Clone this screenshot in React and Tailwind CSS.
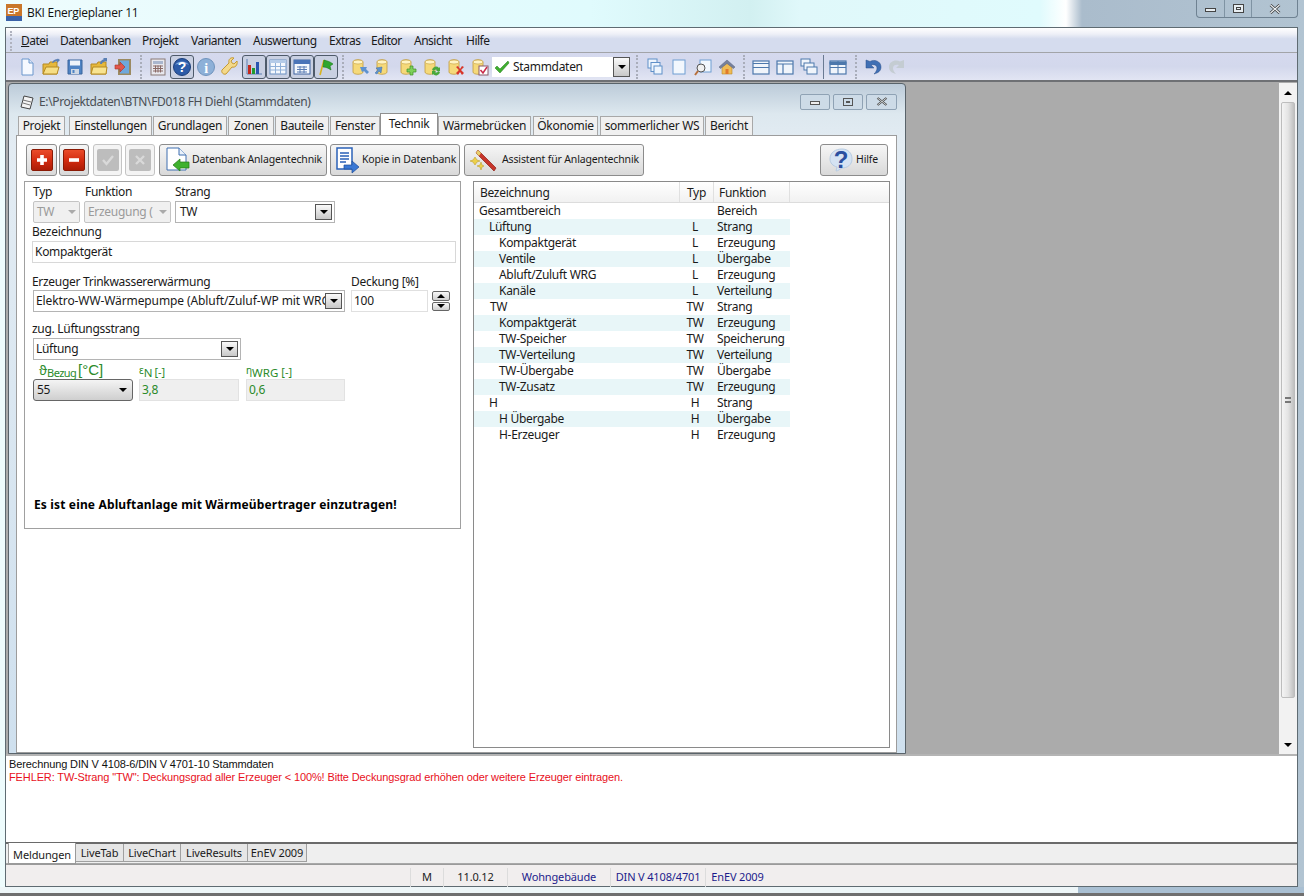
import React from 'react'

const font = "[font-family:'Noto_Sans',sans-serif]"

const menuItems = [
    { label: 'Datei', w: 'w-[39px]', underline: true },
    { label: 'Datenbanken', w: 'w-[82px]' },
    { label: 'Projekt', w: 'w-[49px]' },
    { label: 'Varianten', w: 'w-[62px]' },
    { label: 'Auswertung', w: 'w-[76px]' },
    { label: 'Extras', w: 'w-[42px]' },
    { label: 'Editor', w: 'w-[43px]' },
    { label: 'Ansicht', w: 'w-[52px]' },
    { label: 'Hilfe', w: 'w-[40px]' },
]

const docTabs = [
    { label: 'Projekt', w: 'w-[47px]', mr: 'mr-[4px]' },
    { label: 'Einstellungen', w: 'w-[83px]', mr: 'mr-[1px]' },
    { label: 'Grundlagen', w: 'w-[74px]', mr: 'mr-[1px]' },
    { label: 'Zonen', w: 'w-[46px]', mr: 'mr-[1px]' },
    { label: 'Bauteile', w: 'w-[54px]', mr: 'mr-[1px]' },
    { label: 'Fenster', w: 'w-[50px]', mr: '' },
    { label: 'Technik', w: 'w-[58px]', mr: '', active: true },
    { label: 'Wärmebrücken', w: 'w-[93px]', mr: 'mr-[2px]' },
    { label: 'Ökonomie', w: 'w-[65px]', mr: 'mr-[2px]' },
    { label: 'sommerlicher WS', w: 'w-[104px]', mr: 'mr-[1px]' },
    { label: 'Bericht', w: 'w-[48px]', mr: '' },
]

const treeRows = [
    { name: 'Gesamtbereich', indent: 'pl-[5px]', typ: '', fn: 'Bereich' },
    { name: 'Lüftung', indent: 'pl-[15px]', typ: 'L', fn: 'Strang' },
    { name: 'Kompaktgerät', indent: 'pl-[25px]', typ: 'L', fn: 'Erzeugung' },
    { name: 'Ventile', indent: 'pl-[25px]', typ: 'L', fn: 'Übergabe' },
    { name: 'Abluft/Zuluft WRG', indent: 'pl-[25px]', typ: 'L', fn: 'Erzeugung' },
    { name: 'Kanäle', indent: 'pl-[25px]', typ: 'L', fn: 'Verteilung' },
    { name: 'TW', indent: 'pl-[16px]', typ: 'TW', fn: 'Strang' },
    { name: 'Kompaktgerät', indent: 'pl-[25px]', typ: 'TW', fn: 'Erzeugung' },
    { name: 'TW-Speicher', indent: 'pl-[25px]', typ: 'TW', fn: 'Speicherung' },
    { name: 'TW-Verteilung', indent: 'pl-[25px]', typ: 'TW', fn: 'Verteilung' },
    { name: 'TW-Übergabe', indent: 'pl-[25px]', typ: 'TW', fn: 'Übergabe' },
    { name: 'TW-Zusatz', indent: 'pl-[25px]', typ: 'TW', fn: 'Erzeugung' },
    { name: 'H', indent: 'pl-[15px]', typ: 'H', fn: 'Strang' },
    { name: 'H Übergabe', indent: 'pl-[25px]', typ: 'H', fn: 'Übergabe' },
    { name: 'H-Erzeuger', indent: 'pl-[25px]', typ: 'H', fn: 'Erzeugung' },
]

const bottomTabs = [
    { label: 'LiveTab', w: 'w-[48px]' },
    { label: 'LiveChart', w: 'w-[57px]' },
    { label: 'LiveResults', w: 'w-[67px]' },
    { label: 'EnEV 2009', w: 'w-[59px]' },
]

const statusCells = [
    { label: 'M', w: 'w-[33px]', color: 'text-[#222]' },
    { label: '11.0.12', w: 'w-[64px]', color: 'text-[#222]' },
    { label: 'Wohngebäude', w: 'w-[103px]', color: 'text-[#1c1c8c]' },
    { label: 'DIN V 4108/4701', w: 'w-[95px]', color: 'text-[#1c1c8c]' },
    { label: 'EnEV 2009', w: 'w-[64px]', color: 'text-[#1c1c8c]' },
]

const Ico = ({ children, size = 20 }) => (
    <svg width={size} height={size} viewBox="0 0 20 20" className="block shrink-0">{children}</svg>
)

const Slot = ({ children, pressed }) => (
    <div className="w-[24px] h-[24px] flex items-center justify-center shrink-0">
        {pressed ? (
            <div className="w-[24px] h-[24px] flex items-center justify-center rounded-[3px] border border-[#4e5a6a] bg-[#c9d0e2]">{children}</div>
        ) : children}
    </div>
)

const Grip = ({ w }) => (
    <div className={`${w} h-[24px] flex justify-center shrink-0`}>
        <div className="w-[2px] h-full border-l-2 border-dotted border-[#a9adba]"></div>
    </div>
)

const Arrow = ({ color = 'border-t-black' }) => (
    <div className={`w-0 h-0 border-x-[4px] border-x-transparent border-t-[4px] ${color}`}></div>
)

const DropBtn = () => (
    <div className="absolute right-[2px] top-[2px] bottom-[2px] w-[17px] flex items-center justify-center border border-[#555] bg-gradient-to-b from-[#fafafa] to-[#c8c8c8]">
        <Arrow />
    </div>
)

const Combo = ({ text, w, pl = 'pl-[2px]' }) => (
    <div className={`${w} ${pl} relative h-[22px] border border-[#b4b4b4] bg-white flex items-center pb-[1px] overflow-hidden`}>
        <span className="whitespace-nowrap">{text}</span>
        <DropBtn />
    </div>
)

const DisabledSelect = ({ text, w }) => (
    <div className={`${w} relative h-[22px] border border-[#c4c4c4] rounded-[2px] bg-[#f0f0f0] flex items-center pl-[3px] pb-[1px] text-[#9a9a9a] overflow-hidden`}>
        <span className="whitespace-nowrap">{text}</span>
        <div className="absolute right-0 top-0 bottom-0 w-[15px] bg-[#f0f0f0] flex items-center justify-center">
            <Arrow color="border-t-[#aaa]" />
        </div>
    </div>
)

const Db = ({ children }) => (
    <Ico>
        <path d="M3 5c0-3 10-3 10 0v10c0 3-10 3-10 0z" fill="#f5d97a" stroke="#c29c3c" strokeWidth=".8" />
        <ellipse cx="8" cy="5" rx="5" ry="2" fill="#fff4c4" stroke="#c29c3c" strokeWidth=".6" />
        {children}
    </Ico>
)

const PanelBtn = ({ w, label, icon, gap = 'gap-[1px]', pl = 'pl-[3px]' }) => (
    <div className={`${w} ${gap} ${pl} h-[32px] shrink-0 flex items-center rounded-[3px] border border-[#8c8c8c] bg-gradient-to-b from-[#f6f6f6] to-[#d9d9d9]`}>
        {icon}
        <span className="whitespace-nowrap text-[10.5px] tracking-[-0.15px]">{label}</span>
    </div>
)

const SquareBtn = ({ w, children, disabled }) => (
    <div className={`${w} h-[32px] shrink-0 flex items-center justify-center rounded-[3px] border ${disabled ? 'border-[#c4c4c4] bg-[#f4f4f4]' : 'border-[#8c8c8c] bg-gradient-to-b from-[#f6f6f6] to-[#d9d9d9]'}`}>
        {children}
    </div>
)

const RedIcon = ({ path }) => (
    <div className="w-[22px] h-[22px] rounded-[2px] border border-[#8a1a05] bg-gradient-to-b from-[#ea4c2a] via-[#d42c10] to-[#ac1c06] flex items-center justify-center">
        <svg width="12" height="12" viewBox="0 0 12 12"><path d={path} fill="#fff" /></svg>
    </div>
)

const GrayIcon = ({ children }) => (
    <div className="w-[22px] h-[22px] rounded-[2px] bg-[#bdbdbd] flex items-center justify-center">
        <svg width="14" height="14" viewBox="0 0 14 14" fill="none" stroke="#d9d9d9" strokeWidth="2.4">{children}</svg>
    </div>
)

const WinBtn = ({ w, children }) => (
    <div className={`${w} h-[16px] flex items-center justify-center rounded-[2px] border border-[#8fa2b4] bg-[#cddbe7]`}>{children}</div>
)

const Sub = ({ base, sub, rest, baseCls, subCls, restCls, w }) => (
    <div className={`${w} h-[19px] shrink-0 flex items-end text-[#2a8a2a] whitespace-nowrap leading-none pb-[2px] tracking-normal`}>
        <span className={baseCls}>{base}</span>
        <span className={`${subCls} translate-y-[1px]`}>{sub}</span>
        <span className={restCls}>{rest}</span>
    </div>
)

export default function App() {
    return (
        <div className={`${font} relative w-[1304px] h-[896px] overflow-hidden text-[12px] tracking-[-0.3px] text-[#1a1a1a] bg-[linear-gradient(90deg,#eefcfd_0,#e0fbfd_590px,#d2f0f1_750px,#e0f8fa_800px,#e0fbfd_1040px,#fff_1066px,#aabccc_1082px,#b2c4d2_100%)]`}>
            {/* Title bar */}
            <div className="h-[27px] flex items-start justify-between pr-[6px]">
                <div className="flex items-center h-[25px] pl-[6px] gap-[5px]">
                    <svg width="16" height="17" viewBox="0 0 16 17" className="block">
                        <rect x="0" y="0" width="16" height="12" fill="#c9762a" />
                        <rect x="0" y="12" width="16" height="5" fill="#3a62a8" />
                        <text x="1.5" y="10" fontSize="9" fontWeight="700" fill="#fff" fontFamily="Liberation Sans">EP</text>
                    </svg>
                    <span className="text-[12px] tracking-[-0.25px] text-[#111] [font-family:'Open_Sans',sans-serif]">BKI Energieplaner 11</span>
                </div>
                <div className="flex h-[18px] w-[102px] border border-t-0 border-[#6f8292] rounded-b-[4px] overflow-hidden">
                    <div className="w-[28px] border-r border-[#7f93a3] flex items-center justify-center">
                        <div className="w-[11px] h-[4px] mt-[3px] bg-[#e8eef2] border border-[#444]"></div>
                    </div>
                    <div className="w-[27px] border-r border-[#7f93a3] flex items-center justify-center">
                        <div className="w-[11px] h-[9px] bg-[#e8eef2] border border-[#444] flex items-center justify-center">
                            <div className="w-[5px] h-[3px] border border-[#444]"></div>
                        </div>
                    </div>
                    <div className="flex-1 flex items-center justify-center">
                        <svg width="12" height="10" viewBox="0 0 12 10"><path d="M1.5 1l9 8M10.5 1l-9 8" stroke="#333" strokeWidth="2.6" /><path d="M1.5 1l9 8M10.5 1l-9 8" stroke="#eef2f5" strokeWidth="1.2" /></svg>
                    </div>
                </div>
            </div>

            {/* Application window */}
            <div className="ml-[5px] w-[1293px] h-[860px] border border-[#5f6b72] flex flex-col bg-white">
                {/* Menu */}
                <div className="h-[25px] shrink-0 flex items-center pl-[4px] pt-[2px] tracking-[-0.5px] border-b border-[#a2a4a8] bg-[linear-gradient(180deg,#fff_0,#eef0f7_25%,#d5dcee_45%,#d5dcee_100%)]">
                    <div className="w-[11px] h-[20px] border-l-2 border-dotted border-[#b0b3bf]"></div>
                    {menuItems.map((m) => (
                        <div key={m.label} className={`${m.w} shrink-0 whitespace-nowrap`}>
                            {m.underline ? <><span className="underline">D</span>atei</> : m.label}
                        </div>
                    ))}
                </div>

                {/* Toolbar */}
                <div className="h-[29px] shrink-0 flex items-center pl-[9px] border-b-2 border-[#6e7074] bg-gradient-to-b from-[#d5d9ee] via-[#d3d8ec] to-[#e2e5f3]">
                    <Slot><Ico><path d="M5 2h7l4 4v12H5z" fill="#f6f9ff" stroke="#6a96cc" /><path d="M12 2v4h4" fill="#dbe7f7" stroke="#6a96cc" /></Ico></Slot>
                    <Slot><Ico><path d="M2 7h6l1-2h7v12H2z" fill="#e6b83c" stroke="#b58a22" /><path d="M2 17l3-7h13l-2 7z" fill="#f6de85" stroke="#b58a22" /><path d="M11 6c1-3 3-4 6-4l-1-1 3 2-3 3v-2c-2 0-3 1-4 2z" fill="#5a7fb4" /></Ico></Slot>
                    <Slot><Ico><path d="M3 3h14v14H3z" fill="#4f83c4" stroke="#3a659c" /><rect x="5" y="3.500" width="10" height="5" fill="#eef3fa" /><rect x="6" y="12" width="8" height="5" fill="#cfd8e4" /><rect x="7.500" y="13" width="2" height="3" fill="#4f83c4" /></Ico></Slot>
                    <Slot><Ico><path d="M2 7h6l1-2h8v12H2z" fill="#e6b83c" stroke="#b58a22" /><path d="M2 17l2-7h14l-1 7z" fill="#f8e390" stroke="#b58a22" /><path d="M11 7c0-3 2-4 4-5l-1-1h4v4l-1-1c-2 1-4 1-4 3z" fill="#5a7fb4" /></Ico></Slot>
                    <Slot><Ico><rect x="5" y="2" width="13" height="16" fill="#9b8a62" /><path d="M7 3.500h9v13H7z" fill="#6fa8dc" /><path d="M2 8h5V5l5 5-5 5v-3H2z" fill="#e2574c" stroke="#a8332a" strokeWidth=".6" /></Ico></Slot>
                    <Grip w="w-[11px]" />
                    <Slot><Ico><rect x="3" y="2" width="14" height="16" fill="#e8e8ee" stroke="#8a7a76" /><rect x="5" y="4" width="10" height="3" fill="#a9b6ce" /><path d="M5 9h10M5 11.500h10M5 14h10M7.500 8.500v7M10 8.500v7M12.500 8.500v7" stroke="#8a6a66" /></Ico></Slot>
                    <Slot pressed><Ico><circle cx="10" cy="10" r="8.500" fill="#2c5ba8" stroke="#1d3f7a" /><path d="M3 8a8 7 0 0 1 14 0c-4-2-10-2-14 0z" fill="#7ea5dc" /><text x="10" y="15" textAnchor="middle" fontSize="14" fontWeight="700" fill="#fff" fontFamily="Liberation Sans">?</text></Ico></Slot>
                    <Slot><Ico><circle cx="10" cy="10" r="8.500" fill="#8db0d8" stroke="#6f93bd" /><text x="10" y="15.500" textAnchor="middle" fontSize="14" fontWeight="700" fill="#fff" fontFamily="Liberation Serif">i</text></Ico></Slot>
                    <Slot><Ico><path d="M17 4l-3 3-2-1-1-2 3-3c-3-1-6 1-5 5L2 13c-1 2 1 5 4 4l6-7c3 1 6-2 5-6z" fill="#f4d98a" stroke="#c59a34" /></Ico></Slot>
                    <Slot pressed><Ico><path d="M3 2v15h15" fill="none" stroke="#5e7eb0" /><rect x="4" y="8" width="3" height="9" fill="#c5281c" /><rect x="8" y="11" width="3" height="6" fill="#1f9a2e" /><rect x="12" y="5" width="3" height="12" fill="#2a55b0" /></Ico></Slot>
                    <Slot pressed><Ico><rect x="2" y="3" width="16" height="14" fill="#f4f8fd" stroke="#6a8fc0" /><rect x="2" y="3" width="16" height="3" fill="#b4cbe8" /><path d="M2 9.500h16M2 13h16M7.500 6v11M12.500 6v11" stroke="#8fb0d8" /></Ico></Slot>
                    <Slot pressed><Ico><rect x="2" y="3" width="16" height="14" fill="#f4f8fd" stroke="#3f62a0" /><rect x="2" y="3" width="16" height="4" fill="#4a74b8" /><path d="M5 10h10M5 12.500h10M5 15h10M8 9v7M12 9v7" stroke="#5a7db4" /></Ico></Slot>
                    <Slot pressed><Ico><path d="M4 18L8 3" stroke="#d8b21e" strokeWidth="1.600" /><path d="M8 3c3 1 5 1 9 4l-3 2 1 4c-3-2-5-3-8-3z" fill="#2ea62e" stroke="#1b7a1b" strokeWidth=".6" /></Ico></Slot>
                    <Grip w="w-[10px]" />
                    <Slot><Db><path d="M10 10l2 5 2-1 3 3 2-2-3-3 1-2z" fill="#5d92d0" /></Db></Slot>
                    <Slot><Db><path d="M1 16l3-3-2-2 6-1-1 6-2-2-2 3z" fill="#5d92d0" stroke="#3d6ca6" strokeWidth=".5" /></Db></Slot>
                    <Slot><Db><path d="M12 9h3v3h3v3h-3v3h-3v-3H9v-3h3z" fill="#7dd05a" stroke="#3f8f2a" strokeWidth=".7" /></Db></Slot>
                    <Slot><Db><path d="M10 13a4 4 0 0 1 7-2l1-1v4h-4l1-1a2 2 0 0 0-3 1zM18 15a4 4 0 0 1-7 2l-1 1v-4h4l-1 1a2 2 0 0 0 3-1z" fill="#49a83c" /></Db></Slot>
                    <Slot><Db><path d="M10 10l2-1 2 3 2-3 2 1-3 3 3 3-2 2-2-3-2 3-2-2 3-3z" fill="#d8362a" /></Db></Slot>
                    <Slot><Db><rect x="9" y="9" width="9" height="9" fill="#fff" stroke="#8a5a6a" /><path d="M10.500 13l2.500 3 4-6" fill="none" stroke="#c92a4a" strokeWidth="1.500" /></Db></Slot>

                    <div className="w-[138px] h-[24px] shrink-0 relative flex items-center">
                        <div className="w-[121px] h-[20px] bg-white flex items-center gap-[3px] pl-[2px]">
                            <svg width="16" height="14" viewBox="0 0 16 14" className="shrink-0"><path d="M1 8l2-2 3 3 8-8 1 2L6 13z" fill="#3fae2f" stroke="#227a18" strokeWidth=".5" /></svg>
                            <span>Stammdaten</span>
                        </div>
                        <div className="w-[17px] h-[20px] flex items-center justify-center border border-[#555] bg-gradient-to-b from-[#fafafa] to-[#c8c8c8]">
                            <Arrow />
                        </div>
                    </div>

                    <Grip w="w-[13px]" />
                    <Slot><Ico><rect x="3" y="2" width="9" height="9" fill="#eef5fd" stroke="#5f90c8" /><rect x="6" y="5.500" width="9" height="9" fill="#eef5fd" stroke="#5f90c8" /><rect x="9" y="9" width="8" height="8" fill="#eef5fd" stroke="#5f90c8" /></Ico></Slot>
                    <Slot><Ico><rect x="4" y="3" width="12" height="14" fill="#f2f7fd" stroke="#6f9ed2" /></Ico></Slot>
                    <Slot><Ico><rect x="7" y="3" width="11" height="12" fill="#f2f7fd" stroke="#6f9ed2" /><circle cx="8" cy="11" r="4" fill="#f0f0f0" stroke="#555" /><path d="M5 14l-3 4" stroke="#b8703c" strokeWidth="2" /></Ico></Slot>
                    <Slot><Ico><path d="M5 10v7h10v-7l-5-4z" fill="#efbb54" stroke="#b98a2a" strokeWidth=".6" /><path d="M10 3L2 10l1.500 1.500L10 6.500l6.500 5L18 10z" fill="#76809c" stroke="#5a6480" strokeWidth=".5" /><path d="M8.500 17v-5h3v5z" fill="#e07a2c" /></Ico></Slot>
                    <Grip w="w-[10px]" />
                    <Slot><Ico><rect x="2" y="4" width="16" height="13" fill="#f0f5fb" stroke="#4d78ac" strokeWidth="1.200" /><path d="M2 6.500h16M2 10.500h16" stroke="#4d78ac" strokeWidth="1.200" /></Ico></Slot>
                    <Slot><Ico><rect x="2" y="4" width="16" height="13" fill="#f0f5fb" stroke="#4d78ac" strokeWidth="1.200" /><path d="M2 7h16M8 7v10" stroke="#4d78ac" strokeWidth="1.200" /></Ico></Slot>
                    <Slot><Ico><rect x="2" y="2" width="9" height="7" fill="#f0f5fb" stroke="#4d78ac" /><rect x="5" y="6" width="10" height="7" fill="#f0f5fb" stroke="#4d78ac" /><rect x="8" y="10" width="10" height="7" fill="#f0f5fb" stroke="#4d78ac" /></Ico></Slot>
                    <div className="w-[5px] h-[24px] shrink-0 flex justify-center"><div className="w-[1px] h-full bg-[#6a7a92]"></div></div>
                    <Slot><Ico><rect x="2" y="4" width="16" height="13" fill="#f0f5fb" stroke="#4d78ac" strokeWidth="1.200" /><path d="M2 5h16v2.500H2zM10 4v13M2 10.500h16" fill="#4d78ac" stroke="#4d78ac" strokeWidth="1" /></Ico></Slot>
                    <Grip w="w-[11px]" />
                    <Slot><Ico><path d="M3 3v8h8L8 8c3-1 6 0 6 3 0 2-1 4-3 6 4-1 7-3 7-7 0-6-7-8-11-5.500z" fill="#3f6fb4" stroke="#2a4f88" strokeWidth=".5" /></Ico></Slot>
                    <Slot><Ico><path d="M17 3v8H9l3-3c-3-1-6 0-6 3 0 2 1 4 3 6-4-1-7-3-7-7 0-6 7-8 11-5.500z" fill="#c4ccd2" /></Ico></Slot>
                </div>

                {/* MDI area */}
                <div className="h-[672px] shrink-0 flex bg-[#ababab]">
                    {/* Document window */}
                    <div className="ml-[2px] w-[898px] h-[671px] mt-[1px] rounded-t-[4px] border border-[#59636a] bg-[linear-gradient(180deg,#bccbd9_0,#dde8ef_30px,#e3ecf3_60px,#cfe0ee_100%)] flex flex-col shrink-0">
                        <div className="h-[30px] shrink-0 flex items-center pl-[10px] pr-[8px] pt-[5px]">
                            <svg width="16" height="16" viewBox="0 0 16 16" className="shrink-0"><path d="M5 2l9 2-3 11-9-2z" fill="#f4f4f4" stroke="#444" /><path d="M4 6l8 2M4 9l7 2" stroke="#777" /></svg>
                            <span className="ml-[4px] text-[#4a4f55] tracking-[-0.36px]">E:\Projektdaten\BTN\FD018 FH Diehl (Stammdaten)</span>
                            <div className="ml-auto flex gap-[3px]">
                                <WinBtn w="w-[30px]"><div className="w-[10px] h-[4px] mt-[3px] border border-[#555] bg-[#eee]"></div></WinBtn>
                                <WinBtn w="w-[30px]"><div className="w-[10px] h-[8px] border border-[#555] flex items-center justify-center"><div className="w-[4px] h-[2px] border border-[#555]"></div></div></WinBtn>
                                <WinBtn w="w-[31px]"><svg width="12" height="9" viewBox="0 0 12 9"><path d="M1.500 1l9 7M10.500 1l-9 7" stroke="#444" strokeWidth="2.200" /><path d="M1.500 1l9 7M10.500 1l-9 7" stroke="#eef2f5" strokeWidth=".8" /></svg></WinBtn>
                            </div>
                        </div>

                        {/* Tabs */}
                        <div className="h-[21px] shrink-0 flex items-end pl-[9px] relative z-10">
                            {docTabs.map((t) => t.active ? (
                                <div key={t.label} className={`${t.w} h-[22px] shrink-0 bg-white border border-b-0 border-[#8f8f8f] flex items-center justify-center pb-[1px]`}>{t.label}</div>
                            ) : (
                                <div key={t.label} className={`${t.w} ${t.mr} h-[19px] shrink-0 bg-[#f0f0f0] border border-b-0 border-[#a8a8a8] flex items-center justify-center`}>{t.label}</div>
                            ))}
                        </div>

                        {/* Tab page */}
                        <div className="ml-[7px] w-[881px] h-[618px] border border-[#9c9c9c] bg-white shrink-0">
                            <div className="flex items-center h-[32px] mt-[8px] pl-[9px]">
                                <SquareBtn w="w-[31px]"><RedIcon path="M4.200 1h3.600v3.200H11v3.600H7.800V11H4.200V7.800H1V4.200h3.200z" /></SquareBtn>
                                <div className="ml-[2px]"><SquareBtn w="w-[30px]"><RedIcon path="M1 4.200h10v3.600H1z" /></SquareBtn></div>
                                <div className="ml-[4px]"><SquareBtn w="w-[29px]" disabled><GrayIcon><path d="M2 7l3.500 4L12 3" /></GrayIcon></SquareBtn></div>
                                <div className="ml-[3px]"><SquareBtn w="w-[30px]" disabled><GrayIcon><path d="M3 3l8 8M11 3l-8 8" /></GrayIcon></SquareBtn></div>
                                <div className="ml-[4px]">
                                    <PanelBtn w="w-[168px]" label="Datenbank Anlagentechnik" icon={
                                        <svg width="28" height="28" viewBox="0 0 28 28" className="shrink-0"><path d="M4 2h12l7 7v15H4z" fill="#fff" stroke="#3f6fb0" /><path d="M16 2v7h7" fill="#eaf1fa" stroke="#3f6fb0" /><path d="M10 19l7-6v3h9v6h-9v3z" fill="#3fb12f" stroke="#227a18" strokeWidth=".7" /></svg>
                                    } />
                                </div>
                                <div className="ml-[3px]">
                                    <PanelBtn w="w-[130px]" label="Kopie in Datenbank" gap="gap-[2px]" icon={
                                        <svg width="26" height="28" viewBox="0 0 26 28" className="shrink-0"><rect x="3" y="2" width="15" height="21" fill="#fff" stroke="#2b62b8" strokeWidth="1.500" /><path d="M6 7h9M6 10h9M6 13h9M6 16h6" stroke="#2b62b8" strokeWidth="1.300" /><path d="M10 19h8v-4l7 6-7 6v-4h-8z" fill="#3a78d4" stroke="#1e4b96" strokeWidth=".7" /></svg>
                                    } />
                                </div>
                                <div className="ml-[4px]">
                                    <PanelBtn w="w-[180px]" label="Assistent für Anlagentechnik" gap="gap-[4px]" icon={
                                        <svg width="30" height="26" viewBox="0 0 30 26" className="shrink-0"><path d="M10 3l18 18-2 3L8 6z" fill="#c8352a" stroke="#8c1c14" strokeWidth=".7" /><path d="M8 6l2-3 3 3-2 3z" fill="#e8d06a" /><path d="M7 10l2 3 3 1-3 1-2 3-2-3-3-1 3-1zM13 15l1 3 2 1-2 1-1 3-1-3-3-1 3-1z" fill="#ecd04a" stroke="#b89820" strokeWidth=".5" /></svg>
                                    } />
                                </div>
                                <div className="ml-[176px]">
                                    <PanelBtn w="w-[68px]" label="Hilfe" gap="gap-0" pl="pl-[5px]" icon={
                                        <svg width="30" height="28" viewBox="0 0 30 28" className="shrink-0"><path d="M4 13C4 6 10 3 16 3s10 4 10 10-5 9-10 9c-2 1-4 3-6 3l1-4c-4-1-7-4-7-8z" fill="#d5e3f3" stroke="#b8cce2" /><text x="15" y="22" textAnchor="middle" fontSize="24" fontWeight="700" fill="#2a4fa0" fontFamily="Liberation Sans">?</text></svg>
                                    } />
                                </div>
                            </div>

                            <div className="flex mt-[5px] ml-[7px]">
                                {/* Left form */}
                                <div className="w-[437px] h-[348px] shrink-0 border border-[#a0a0a0] pl-[8px]">
                                    <div className="flex h-[19px] items-center">
                                        <div className="w-[52px]">Typ</div>
                                        <div className="w-[90px]">Funktion</div>
                                        <div>Strang</div>
                                    </div>
                                    <div className="flex gap-[4px]">
                                        <DisabledSelect text="TW" w="w-[47px]" />
                                        <DisabledSelect text="Erzeugung (" w="w-[87px]" />
                                        <Combo text="TW" w="w-[160px]" pl="pl-[4px]" />
                                    </div>
                                    <div className="h-[18px] flex items-center -ml-[1px]">Bezeichnung</div>
                                    <div className="-ml-[1px] w-[424px] h-[22px] border border-[#d8d8d8] flex items-center pl-[2px] pb-[1px]">Kompaktgerät</div>

                                    <div className="flex h-[17px] mt-[10px] items-center">
                                        <div className="w-[319px] -ml-[1px]">Erzeuger Trinkwassererwärmung</div>
                                        <div>Deckung [%]</div>
                                    </div>
                                    <div className="flex">
                                        <Combo text="Elektro-WW-Wärmepumpe (Abluft/Zuluf-WP mit WRG)" w="w-[312px]" pl="pl-[2px] tracking-[-0.1px]" />
                                        <div className="ml-[6px] w-[77px] h-[22px] border border-[#e0e0e0] flex items-center pl-[2px] pb-[1px]">100</div>
                                        <div className="ml-[4px] w-[18px] h-[20px] mt-[1px] flex flex-col gap-[1px]">
                                            <div className="flex-1 flex items-center justify-center border border-[#666] rounded-[2px] bg-gradient-to-b from-[#f8f8f8] to-[#d0d0d0]">
                                                <div className="w-0 h-0 border-x-[4px] border-x-transparent border-b-[4px] border-b-black"></div>
                                            </div>
                                            <div className="flex-1 flex items-center justify-center border border-[#666] rounded-[2px] bg-gradient-to-b from-[#f8f8f8] to-[#d0d0d0]">
                                                <Arrow />
                                            </div>
                                        </div>
                                    </div>

                                    <div className="h-[19px] mt-[7px] flex items-center -ml-[1px]">zug. Lüftungsstrang</div>
                                    <Combo text="Lüftung" w="w-[208px]" />

                                    <div className="flex h-[19px]">
                                        <Sub w="w-[106px] pl-[6px]" base="ϑ" baseCls="text-[13px]" sub="Bezug" subCls="text-[11px] tracking-[-0.6px]" rest="[°C]" restCls="text-[15px] ml-[2px] [font-family:'Liberation_Sans',sans-serif]" />
                                        <Sub w="w-[107px]" base="ε" baseCls="text-[10px] -translate-y-[2px]" sub="N" subCls="text-[11.5px]" rest="[-]" restCls="text-[11px] ml-[2px]" />
                                        <Sub w="w-[100px]" base="η" baseCls="text-[10px] -translate-y-[2px]" sub="WRG" subCls="text-[11.5px]" rest="[-]" restCls="text-[11px] ml-[3px]" />
                                    </div>
                                    <div className="flex">
                                        <div className="w-[100px] h-[22px] rounded-[3px] border border-[#666] bg-gradient-to-b from-[#f4f4f4] to-[#cfcfcf] flex items-center justify-between pl-[3px] pr-[5px] text-[12px]">
                                            <span>55</span>
                                            <Arrow />
                                        </div>
                                        <div className="ml-[6px] w-[100px] h-[22px] bg-[#efefef] border border-[#e2e2e2] flex items-center pl-[2px] text-[#2a8a2a]">3,8</div>
                                        <div className="ml-[7px] w-[99px] h-[22px] bg-[#efefef] border border-[#e2e2e2] flex items-center pl-[2px] text-[#2a8a2a]">0,6</div>
                                    </div>

                                    <div className="mt-[96px] h-[16px] flex items-center pl-[1px] font-bold text-black tracking-[0.15px]">Es ist eine Abluftanlage mit Wärmeübertrager einzutragen!</div>
                                </div>

                                {/* Right tree */}
                                <div className="ml-[12px] w-[417px] h-[567px] shrink-0 border border-[#8a8a8a]">
                                    <div className="h-[21px] flex border-b border-[#dcdcdc] bg-gradient-to-b from-white to-[#f1f1f1]">
                                        <div className="w-[206px] pl-[6px] pt-[1px] flex items-center border-r border-[#e0e0e0]">Bezeichnung</div>
                                        <div className="w-[34px] pt-[1px] flex items-center justify-center border-r border-[#e0e0e0]">Typ</div>
                                        <div className="w-[76px] pl-[5px] pt-[1px] flex items-center border-r border-[#e0e0e0]">Funktion</div>
                                    </div>
                                    <div>
                                        {treeRows.map((r, i) => (
                                            <div key={i} className={`w-[316px] h-[16px] flex items-center ${i % 2 === 1 ? 'bg-[#e8f6f8]' : ''}`}>
                                                <div className={`w-[206px] ${r.indent}`}>{r.name}</div>
                                                <div className="w-[30px] text-center">{r.typ}</div>
                                                <div className="pl-[7px] whitespace-nowrap">{r.fn}</div>
                                            </div>
                                        ))}
                                    </div>
                                </div>
                            </div>
                        </div>
                    </div>

                    <div className="flex-1"></div>

                    {/* MDI scrollbar */}
                    <div className="w-[18px] shrink-0 bg-[#f2f2f2] flex flex-col items-center pt-[8px] mt-[1px]">
                        <div className="w-0 h-0 border-x-[4px] border-x-transparent border-b-[4px] border-b-black"></div>
                        <div className="relative mt-[7px] w-[14px] h-[596px] rounded-[2px] border border-[#bdbdbd] bg-gradient-to-r from-[#f4f4f4] via-[#e4e4e4] to-[#c0c0c0] flex items-center justify-center">
                            <div className="w-[6px] h-[6px] border-y-2 border-double border-[#777]"></div>
                        </div>
                        <div className="mt-auto mb-[7px]"><Arrow /></div>
                    </div>
                </div>

                {/* Message panel */}
                <div className="h-[88px] shrink-0 border-t-2 border-[#b4b4b4] bg-white pl-[3px] pt-[2px] text-[11px] leading-[13px] tracking-[-0.12px] [font-family:'Liberation_Sans',sans-serif]">
                    <div className="text-[#111]">Berechnung DIN V 4108-6/DIN V 4701-10 Stammdaten</div>
                    <div className="text-[#e8101c]">FEHLER: TW-Strang "TW": Deckungsgrad aller Erzeuger &lt; 100%! Bitte Deckungsgrad erhöhen oder weitere Erzeuger eintragen.</div>
                </div>

                {/* Bottom tabs */}
                <div className="h-[22px] shrink-0 flex items-start pl-[2px] border-t-2 border-b border-t-[#6a6a6a] border-b-[#a8a8a8] bg-[#efefef] text-[11px] tracking-[-0.15px]">
                    <div className="w-[68px] h-[21px] -mt-[1px] pt-[4px] bg-white border-x border-b border-[#9a9a9a] flex items-center justify-center relative z-10">Meldungen</div>
                    {bottomTabs.map((t) => (
                        <div key={t.label} className={`${t.w} h-[18px] pt-[1px] shrink-0 border-r border-b border-[#a0a0a0] bg-[#e6e6e6] flex items-center justify-center`}>{t.label}</div>
                    ))}
                </div>

                {/* Status bar */}
                <div className="h-[22px] shrink-0 flex items-center pl-[404px] pt-[3px] bg-[#f1eeee] border-t border-[#9a9a9a] text-[11px] tracking-[-0.15px]">
                    {statusCells.map((c) => (
                        <div key={c.label} className={`${c.w} ${c.color} h-[19px] shrink-0 flex items-center justify-center border-l border-[#dcdcdc]`}>{c.label}</div>
                    ))}
                </div>
            </div>

            {/* Bottom desktop strip */}
            <div className="h-[6px] bg-[linear-gradient(90deg,#eef6f8_0,#eef6f8_1078px,#a9bfd2_1078px,#a9bfd2_1304px)]"></div>
            <div className="h-[3px] bg-[#6f6f6f]"></div>
        </div>
    )
}
